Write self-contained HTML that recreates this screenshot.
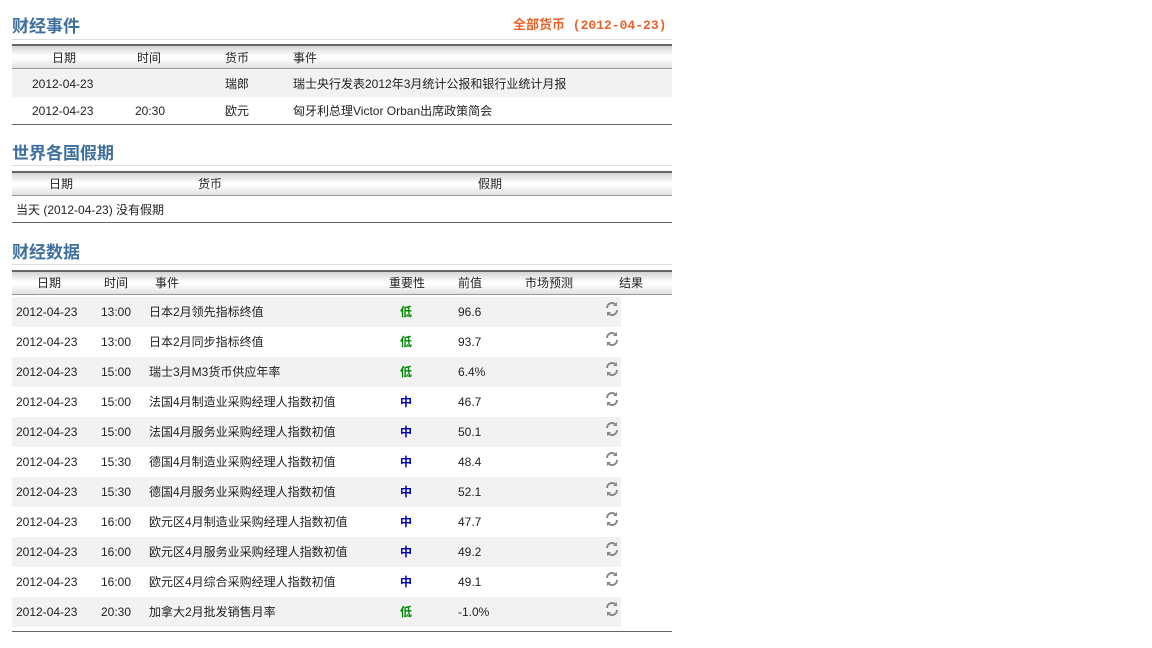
<!DOCTYPE html>
<html><head><meta charset="utf-8"><style>
body{margin:0;width:1152px;height:648px;background:#fff;position:relative;font-family:"Liberation Sans","Noto Sans CJK SC",sans-serif;font-size:12px;color:#222;overflow:hidden}
.a{position:absolute;white-space:nowrap;line-height:14px}
.t{position:absolute;left:12px;font-size:17px;font-weight:bold;color:#3f6f9e;line-height:20px}
.tl{position:absolute;left:12px;width:660px;height:1px;background:#ddd}
.hb{position:absolute;left:12px;width:660px;border-top:2px solid #666;border-bottom:1px solid #999;background:linear-gradient(#d4d4d4,#fff 45%,#fff 55%,#e0e0e0)}
.r{position:absolute;left:12px;height:30px}
.g{background:#f2f2f2}
.bl{position:absolute;left:12px;width:660px;height:1px;background:#666}
.lo{color:#080;font-weight:bold}
.mid{color:#00a;font-weight:bold}
.ic{position:absolute;left:604px;width:16px;height:16px}
</style></head><body>
<div class="t" style="top:17px">财经事件</div>
<div class="a" style="left:513px;top:19px;font-size:13px;font-weight:bold;color:#e8632a;font-family:'Liberation Mono','Noto Sans CJK SC',monospace">全部货币 (2012-04-23)</div>
<div class="tl" style="top:39px"></div>
<div class="hb" style="top:44px;height:22px"></div>
<div class="a" style="left:52px;top:51px">日期</div><div class="a" style="left:137px;top:51px">时间</div><div class="a" style="left:225px;top:51px">货币</div><div class="a" style="left:293px;top:51px">事件</div>
<div class="r g" style="top:69px;width:660px;height:28px"></div>
<div class="a" style="left:32px;top:77px">2012-04-23</div><div class="a" style="left:225px;top:77px">瑞郎</div><div class="a" style="left:293px;top:77px">瑞士央行发表2012年3月统计公报和银行业统计月报</div>
<div class="a" style="left:32px;top:104px">2012-04-23</div><div class="a" style="left:135px;top:104px">20:30</div><div class="a" style="left:225px;top:104px">欧元</div><div class="a" style="left:293px;top:104px">匈牙利总理Victor Orban出席政策简会</div>
<div class="bl" style="top:124px"></div>

<div class="t" style="top:144px">世界各国假期</div>
<div class="tl" style="top:165px"></div>
<div class="hb" style="top:171px;height:22px"></div>
<div class="a" style="left:49px;top:177px">日期</div><div class="a" style="left:198px;top:177px">货币</div><div class="a" style="left:478px;top:177px">假期</div>
<div class="a" style="left:16px;top:203px">当天 (2012-04-23) 没有假期</div>
<div class="bl" style="top:222px"></div>

<div class="t" style="top:243px">财经数据</div>
<div class="tl" style="top:264px"></div>
<div class="hb" style="top:270px;height:22px"></div>
<div class="a" style="left:37px;top:276px">日期</div><div class="a" style="left:104px;top:276px">时间</div><div class="a" style="left:155px;top:276px">事件</div><div class="a" style="left:389px;top:276px">重要性</div><div class="a" style="left:458px;top:276px">前值</div><div class="a" style="left:525px;top:276px">市场预测</div><div class="a" style="left:619px;top:276px">结果</div>
<div id="rows"></div>
<div class="bl" style="top:631px"></div>
<script>
var d=[["13:00","日本2月领先指标终值","低","96.6"],["13:00","日本2月同步指标终值","低","93.7"],["15:00","瑞士3月M3货币供应年率","低","6.4%"],["15:00","法国4月制造业采购经理人指数初值","中","46.7"],["15:00","法国4月服务业采购经理人指数初值","中","50.1"],["15:30","德国4月制造业采购经理人指数初值","中","48.4"],["15:30","德国4月服务业采购经理人指数初值","中","52.1"],["16:00","欧元区4月制造业采购经理人指数初值","中","47.7"],["16:00","欧元区4月服务业采购经理人指数初值","中","49.2"],["16:00","欧元区4月综合采购经理人指数初值","中","49.1"],["20:30","加拿大2月批发销售月率","低","-1.0%"]];
var h="";
d.forEach(function(r,i){var y=297+i*30;
h+='<div class="r'+(i%2==0?' g':'')+'" style="top:'+y+'px;width:609px"></div>';
var ty=y+8;
h+='<div class="a" style="left:16px;top:'+ty+'px">2012-04-23</div><div class="a" style="left:101px;top:'+ty+'px">'+r[0]+'</div><div class="a" style="left:149px;top:'+ty+'px">'+r[1]+'</div><div class="a '+(r[2]=="低"?"lo":"mid")+'" style="left:400px;top:'+ty+'px">'+r[2]+'</div><div class="a" style="left:458px;top:'+ty+'px">'+r[3]+'</div>';
h+='<svg class="ic" style="top:'+(y+4)+'px" viewBox="0 0 16 16"><path d="M3 7a5 5 0 0 1 9-3" fill="none" stroke="#888" stroke-width="2"/><path d="M13 1v4h-4z" fill="#888"/><path d="M13 9a5 5 0 0 1-9 3" fill="none" stroke="#888" stroke-width="2"/><path d="M3 15v-4h4z" fill="#888"/></svg>';
});
document.getElementById("rows").innerHTML=h;
</script>
</body></html>
